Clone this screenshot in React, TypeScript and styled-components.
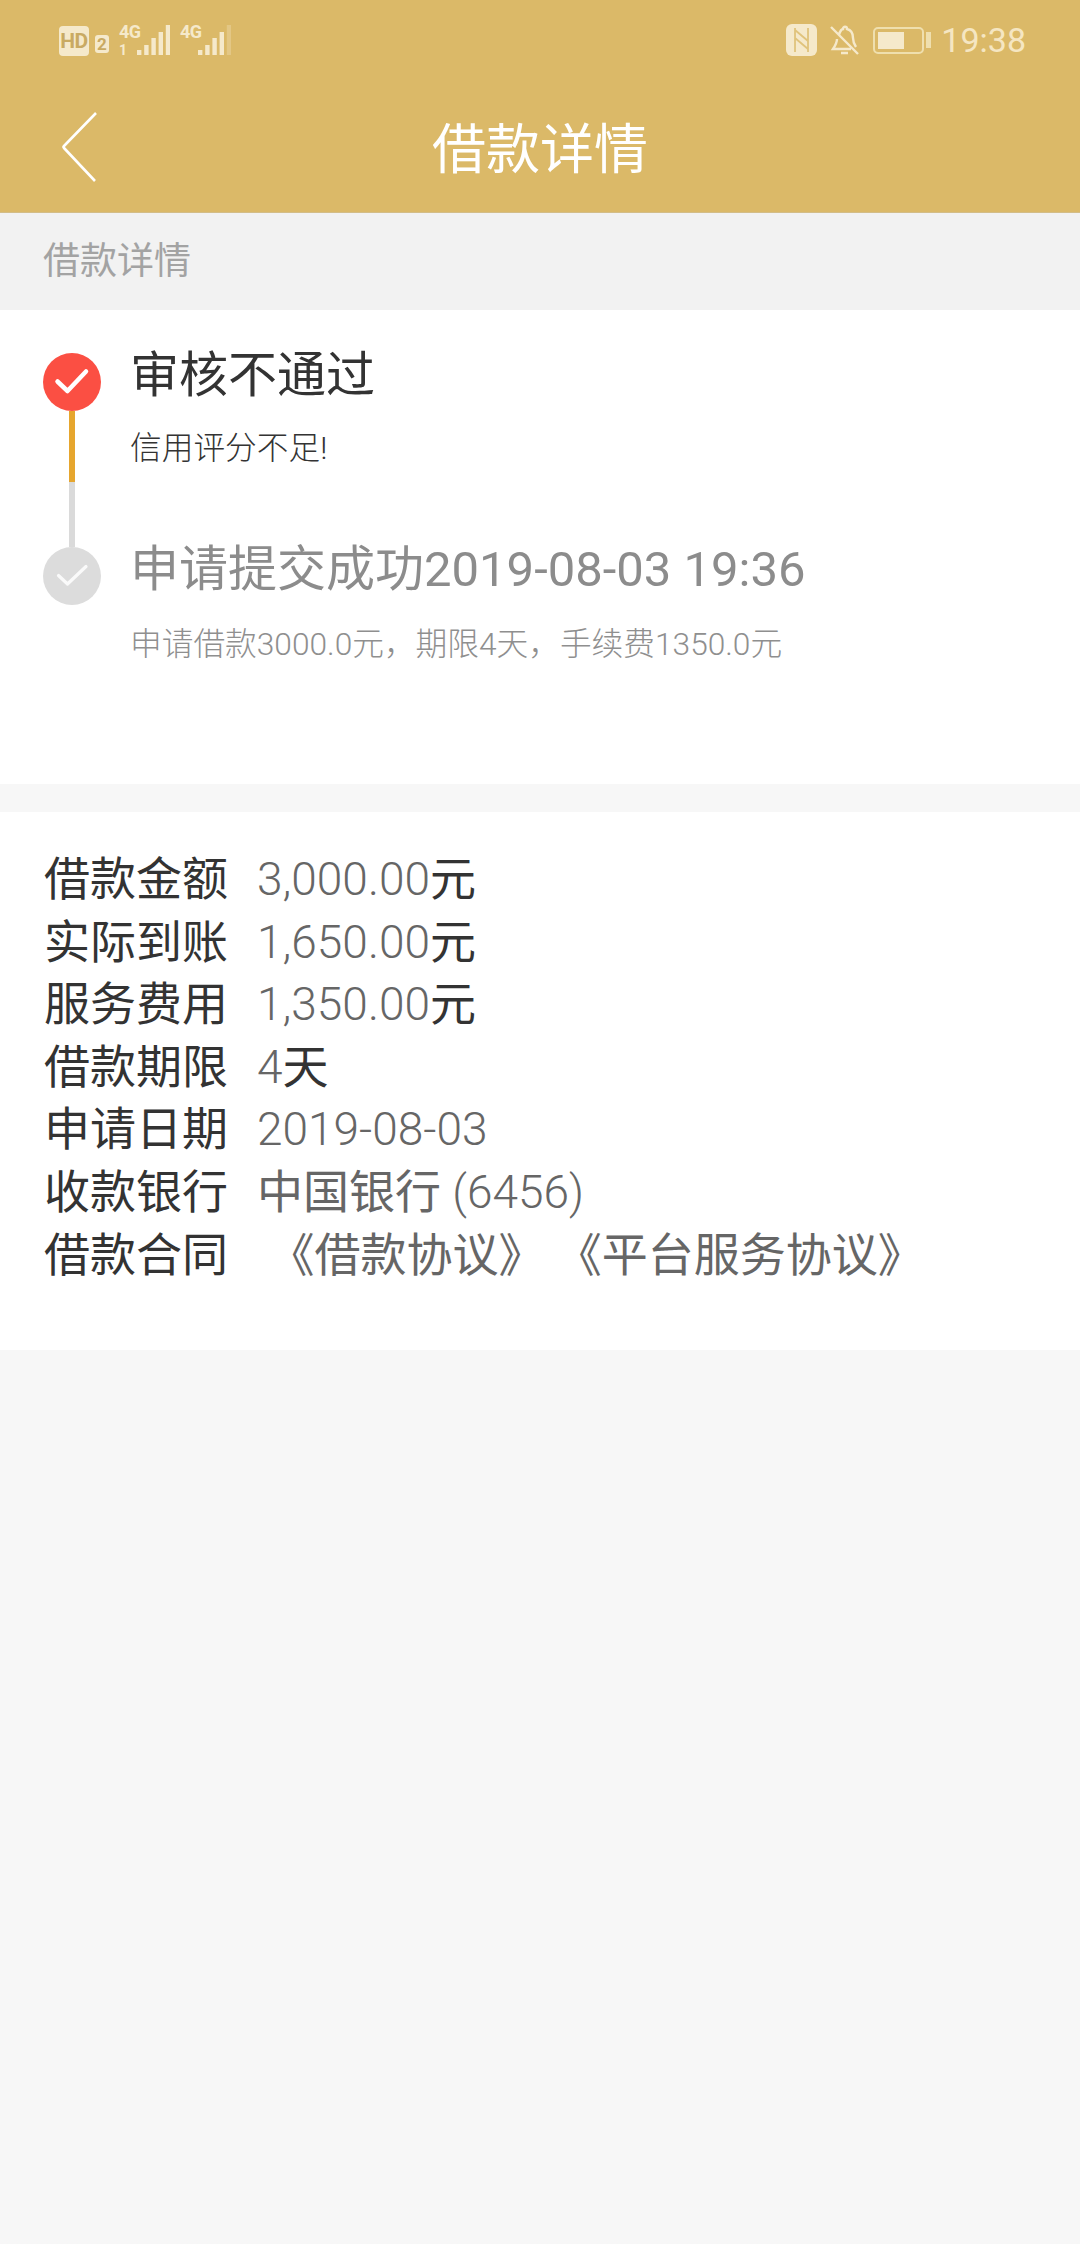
import React from "react";
import styled, { createGlobalStyle } from "styled-components";

const GlobalStyle = createGlobalStyle`
  html, body {
    margin: 0;
    padding: 0;
    background: #f7f7f7;
    font-family: "Noto Sans CJK SC", "Noto Sans", sans-serif;
    text-spacing-trim: space-all;
  }
  * { box-sizing: border-box; }
`;

const details = [
  { label: "借款金额", value: "3,000.00", unit: "元" },
  { label: "实际到账", value: "1,650.00", unit: "元" },
  { label: "服务费用", value: "1,350.00", unit: "元" },
  { label: "借款期限", value: "4", unit: "天" },
  { label: "申请日期", value: "2019-08-03" },
  { label: "收款银行", bank: "中国银行", value: " (6456)" },
];

function SignalBars({ active }: { active: number }) {
  const heights = [5, 10, 17, 23, 30];
  return (
    <svg width="34" height="30" viewBox="0 0 34 30">
      {heights.map((h, i) => (
        <rect
          key={h}
          x={1 + i * 7.2}
          y={30 - h}
          width="4.4"
          height={h}
          fill="#f5e9cb"
          opacity={i < active ? 1 : 0.3}
        />
      ))}
    </svg>
  );
}

function CheckDot({ color, tick, muted }: { color: string; tick: number; muted?: boolean }) {
  return (
    <svg width="58" height="58" viewBox="0 0 58 58">
      <circle cx="29" cy="29" r="29" fill={color} />
      <path
        d={muted ? "M15.5 28.5 L24.5 37 L43 19.5" : "M14.5 28.5 L24.5 38 L43 18.5"}
        fill="none"
        stroke="#fff"
        strokeOpacity={muted ? 0.85 : 1}
        strokeWidth={tick}
        strokeLinecap="round"
        strokeLinejoin="round"
      />
    </svg>
  );
}

export default function App() {
  return (
    <Page>
      <GlobalStyle />
      <Header>
        <StatusBar>
          <StatusGroup>
            <HdBadge>HD</HdBadge>
            <SimBadge>2</SimBadge>
            <SignalGroup>
              <NetStack>
                <NetLabel>4G</NetLabel>
                <NetIndex>1</NetIndex>
              </NetStack>
              <SignalBars active={5} />
            </SignalGroup>
            <SignalGroup>
              <NetStack>
                <NetLabel>4G</NetLabel>
              </NetStack>
              <SignalBars active={4} />
            </SignalGroup>
          </StatusGroup>
          <StatusRight>
            <svg width="31" height="32" viewBox="0 0 31 32">
              <rect width="31" height="32" rx="6" fill="#f5e9cb" />
              <path
                d="M9 4v24M22 4v24M9 6l13 11M9 14l13 11"
                fill="none"
                stroke="#dbb968"
                strokeOpacity="0.8"
                strokeWidth="1.8"
              />
            </svg>
            <svg width="30" height="32" viewBox="0 0 30 32">
              <path
                d="M9 11c1-4 3-6 4-6 0-3 4-3 4 0 4 1 6 4 6 9 0 4 1 6 3 9M21 25H3c2-3 4-6 4-10M11 29h7M1 3l27 27"
                fill="none"
                stroke="#f5e9cb"
                strokeWidth="2.4"
              />
            </svg>
            <BatteryWrap>
              <Battery>
                <BatteryLevel />
              </Battery>
              <BatteryTip />
            </BatteryWrap>
            <Clock>19:38</Clock>
          </StatusRight>
        </StatusBar>
        <NavBar>
          <BackIcon width="38" height="72" viewBox="0 0 38 72">
            <path
              d="M35 2 L3 35 Q2 36 3 37 L34 70"
              fill="none"
              stroke="#fff"
              strokeWidth="2.6"
            />
          </BackIcon>
          <NavTitle>借款详情</NavTitle>
        </NavBar>
      </Header>

      <SectionLabel>借款详情</SectionLabel>

      <TimelineCard>
        <Step>
          <Rail>
            <CheckDot color="#fb4f43" tick={4.5} />
            <RailLine $color="#e6a62e" $height={71} />
            <RailLine $color="#dadada" $height={65} />
          </Rail>
          <StepBody>
            <StepTitle>审核不通过</StepTitle>
            <StepNote>信用评分不足!</StepNote>
          </StepBody>
        </Step>
        <Step>
          <Rail>
            <CheckDot color="#dcdcdc" tick={3.2} muted />
          </Rail>
          <StepBody>
            <StepTitle $muted>申请提交成功2019-08-03 19:36</StepTitle>
            <StepNote $muted>申请借款3000.0元，期限4天，手续费1350.0元</StepNote>
          </StepBody>
        </Step>
      </TimelineCard>

      <DetailCard>
        {details.map((row) => (
          <DetailRow key={row.label}>
            <DetailLabel>{row.label}</DetailLabel>
            <DetailValue>
              {row.bank && <BankName>{row.bank}</BankName>}
              {row.value}
              {row.unit && <DetailUnit>{row.unit}</DetailUnit>}
            </DetailValue>
          </DetailRow>
        ))}
        <DetailRow>
          <DetailLabel>借款合同</DetailLabel>
          <ContractLinks> 《借款协议》 《平台服务协议》</ContractLinks>
        </DetailRow>
      </DetailCard>
    </Page>
  );
}

const Page = styled.div`
  width: 1080px;
  height: 2244px;
  overflow: hidden;
  background: #f7f7f7;
`;

const Header = styled.header`
  height: 213px;
  background: #dbb968;
  border-bottom: 1px solid #d3bd88;
`;

const StatusBar = styled.div`
  height: 80px;
  padding: 24px 54px 0 59px;
  display: flex;
  justify-content: space-between;
  align-items: flex-start;
`;

const StatusGroup = styled.div`
  display: flex;
  align-items: flex-start;
`;

const StatusRight = styled.div`
  display: flex;
  align-items: center;
  gap: 13px;
  height: 32px;
`;

const HdBadge = styled.div`
  width: 30px;
  height: 30px;
  margin-top: 2px;
  border-radius: 4px;
  background: #f5e9cb;
  color: #c9aa62;
  font: 700 21px/30px "Roboto", sans-serif;
  letter-spacing: -0.5px;
  text-align: center;
`;

const SimBadge = styled.div`
  width: 14px;
  height: 18px;
  margin: 11px 0 0 6px;
  border-radius: 3px;
  background: #f5e9cb;
  color: #c9aa62;
  font: 700 17px/18px "Liberation Sans Narrow", "Roboto", sans-serif;
  text-align: center;
`;

const SignalGroup = styled.div`
  display: flex;
  align-items: flex-end;
  height: 30px;
  margin-top: 1px;
  margin-left: 10px;

  &:first-of-type {
    margin-left: 11px;
  }
`;

const NetStack = styled.div`
  display: flex;
  flex-direction: column;
  justify-content: space-between;
  align-self: stretch;
  width: 17px;
`;

const NetLabel = styled.span`
  color: #f5e9cb;
  font: 700 18px/14px "Liberation Sans Narrow", "Roboto", sans-serif;
  letter-spacing: -0.5px;
`;

const NetIndex = styled(NetLabel)`
  font-size: 14px;
  line-height: 10px;
`;

const BatteryWrap = styled.div`
  display: flex;
  align-items: center;
  gap: 2px;
`;

const Battery = styled.div`
  width: 51px;
  height: 27px;
  padding: 3px;
  border: 2px solid #efdfae;
  border-radius: 5px;
`;

const BatteryLevel = styled.div`
  width: 26px;
  height: 100%;
  background: #f5e9cb;
`;

const BatteryTip = styled.div`
  width: 5px;
  height: 16px;
  background: #efdfae;
`;

const Clock = styled.span`
  margin-left: -3px;
  color: #f5e6c2;
  font: 400 34px/32px "Roboto", sans-serif;
`;

const NavBar = styled.div`
  position: relative;
  height: 132px;
  display: flex;
  align-items: center;
  justify-content: center;
`;

const BackIcon = styled.svg`
  position: absolute;
  left: 61px;
  top: 31px;
`;

const NavTitle = styled.h1`
  margin: 0 0 1px;
  color: #fff;
  font-size: 54px;
  font-weight: 400;
  line-height: 72px;
`;

const SectionLabel = styled.div`
  height: 97px;
  padding-left: 43px;
  background: #f2f2f2;
  color: #a3a3a3;
  font-size: 37px;
  line-height: 90px;
`;

const TimelineCard = styled.section`
  height: 474px;
  padding: 43px 0 0 43px;
  background: #fff;
`;

const Step = styled.div`
  display: flex;
  gap: 29px;
`;

const Rail = styled.div`
  width: 58px;
  display: flex;
  flex-direction: column;
  align-items: center;
  flex: none;

  svg {
    display: block;
  }
`;

const RailLine = styled.div<{ $color: string; $height: number }>`
  width: 6px;
  height: ${(p) => p.$height}px;
  background: ${(p) => p.$color};
`;

const StepBody = styled.div`
  margin-top: -12px;
`;

const StepTitle = styled.div<{ $muted?: boolean }>`
  color: ${(p) => (p.$muted ? "#8c8c8c" : "#333")};
  font-family: "Roboto", "Noto Sans CJK SC", sans-serif;
  font-size: 49px;
  line-height: 70px;
`;

const StepNote = styled.div<{ $muted?: boolean }>`
  margin-top: ${(p) => (p.$muted ? 17 : 15)}px;
  color: ${(p) => (p.$muted ? "#8f8f8f" : "#333")};
  font-family: "Roboto", "Noto Sans CJK SC", sans-serif;
  font-size: 31.7px;
  font-weight: 300;
  line-height: 46px;
`;

const DetailCard = styled.section`
  height: 538px;
  margin-top: 28px;
  padding: 32px 0 0 44px;
  background: #fff;
`;

const DetailRow = styled.div`
  display: flex;
  align-items: baseline;
  height: 62.6px;
  line-height: 62.6px;
`;

const DetailLabel = styled.span`
  width: 213px;
  flex: none;
  color: #333;
  font-size: 46px;
`;

const DetailValue = styled.span`
  color: #666;
  font-family: "Roboto", "Noto Sans CJK SC", sans-serif;
  font-size: 46px;
  font-weight: 300;
  white-space: pre;
`;

const DetailUnit = styled.span`
  color: #333;
  font-family: "Noto Sans CJK SC", sans-serif;
  font-weight: 400;
`;

const BankName = styled.span`
  font-family: "Noto Sans CJK SC", sans-serif;
  font-weight: 400;
`;

const ContractLinks = styled.span`
  color: #666;
  font-family: "Roboto", "Noto Sans CJK SC", sans-serif;
  font-size: 46px;
  white-space: pre;
`;
